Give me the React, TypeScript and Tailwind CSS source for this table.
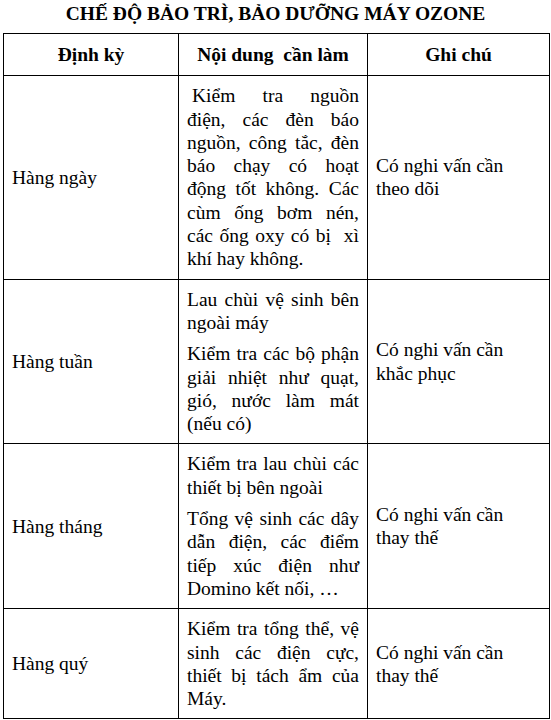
import React from "react";

type Para = { lines: string[]; indent?: boolean };

const ROWS: { period: string; work: Para[]; note: string[] }[] = [
  {
    period: "Hàng ngày",
    work: [
      {
        indent: true,
        lines: [
          "Kiểm tra nguồn",
          "điện, các đèn báo",
          "nguồn, công tắc, đèn",
          "báo chạy có hoạt",
          "động tốt không. Các",
          "cùm ống bơm nén,",
          "các ống oxy có bị  xì",
          "khí hay không.",
        ],
      },
    ],
    note: ["Có nghi vấn cần", "theo dõi"],
  },
  {
    period: "Hàng tuần",
    work: [
      { lines: ["Lau chùi vệ sinh bên", "ngoài máy"] },
      { lines: ["Kiểm tra các bộ phận", "giải nhiệt như quạt,", "gió, nước làm mát", "(nếu có)"] },
    ],
    note: ["Có nghi vấn cần", "khắc phục"],
  },
  {
    period: "Hàng tháng",
    work: [
      { lines: ["Kiểm tra lau chùi các", "thiết bị bên ngoài"] },
      { lines: ["Tổng vệ sinh các dây", "dẫn điện, các điểm", "tiếp xúc điện như", "Domino kết nối, …"] },
    ],
    note: ["Có nghi vấn cần", "thay thế"],
  },
  {
    period: "Hàng quý",
    work: [{ lines: ["Kiểm tra tổng thể, vệ", "sinh các điện cực,", "thiết bị tách ẩm của", "Máy."] }],
    note: ["Có nghi vấn cần", "thay thế"],
  },
];

const serif = "font-[family-name:Liberation_Serif,Times_New_Roman,serif] text-[19.5px] leading-[23.3px]";

// justified lines: every line but the last of a paragraph is stretched
const Paragraph = ({ p, first }: { p: Para; first: boolean }) => (
  <div className={first ? "" : "mt-2"}>
    {p.lines.map((line, i) => {
      const last = i === p.lines.length - 1;
      return (
        <div
          key={i}
          className={`whitespace-pre ${last ? "text-left" : "text-justify [text-align-last:justify]"} ${
            p.indent && i === 0 ? "pl-[5px]" : ""
          }`}
        >
          {line}
        </div>
      );
    })}
  </div>
);

export default function App() {
  return (
    <div className={`w-[551px] h-[720px] bg-white text-black ${serif}`}>
      <h1 className="pt-[2px] text-center font-bold">CHẾ ĐỘ BẢO TRÌ, BẢO DƯỠNG MÁY OZONE</h1>
      <table className={`mt-[8px] ml-[3px] w-[546px] table-fixed border-collapse text-black ${serif}`}>
        <colgroup>
          <col className="w-[175px]" />
          <col className="w-[189px]" />
          <col className="w-[182px]" />
        </colgroup>
        <thead>
          <tr className="h-[42px] font-bold">
            <th className="border border-black px-2 text-center align-middle">Định kỳ</th>
            <th className="border border-black px-2 text-center align-middle whitespace-pre">Nội dung  cần làm</th>
            <th className="border border-black px-2 text-center align-middle">Ghi chú</th>
          </tr>
        </thead>
        <tbody>
          {ROWS.map((row) => (
            <tr key={row.period}>
              <td className="border border-black px-2 align-middle">{row.period}</td>
              <td className="border border-black px-2 py-2 align-top">
                {row.work.map((p, i) => (
                  <Paragraph key={i} p={p} first={i === 0} />
                ))}
              </td>
              <td className="border border-black px-2 align-middle">
                {row.note.map((l, i) => (
                  <div key={i}>{l}</div>
                ))}
              </td>
            </tr>
          ))}
        </tbody>
      </table>
    </div>
  );
}
